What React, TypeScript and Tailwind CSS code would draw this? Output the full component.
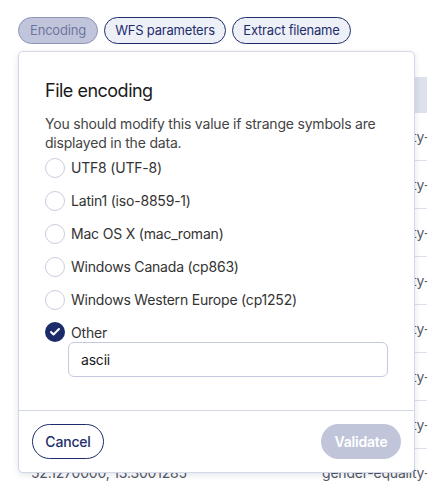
import { Check } from "lucide-react";

const options = [
  "UTF8 (UTF-8)",
  "Latin1 (iso-8859-1)",
  "Mac OS X (mac_roman)",
  "Windows Canada (cp863)",
  "Windows Western Europe (cp1252)",
];

const rows = Array.from({ length: 8 }, () => ({
  coords: "52.1270000, 13.3001285",
  tag: "gender-equality-ranking",
}));

function Radio({ checked = false }: { checked?: boolean }) {
  if (checked) {
    return (
      <span className="flex h-5 w-5 shrink-0 items-center justify-center rounded-full bg-[#1b2a68]">
        <Check size={12} strokeWidth={4} className="text-white" />
      </span>
    );
  }
  return <span className="h-5 w-5 shrink-0 rounded-full border border-[#c9cde0] bg-white" />;
}

export default function App() {
  return (
    <div className="relative h-[484px] w-[427px] overflow-hidden bg-white font-['Inter',sans-serif] tracking-[-0.2px]">
      <div className="flex gap-[6px] px-[18px] pt-[17px]">
        <button className="h-[27px] w-[80px] rounded-full border border-[#8d94b9] bg-[#c1c5db] text-[13px] text-[#6e76a0]">
          Encoding
        </button>
        <button className="h-[27px] w-[122px] rounded-full border border-[#1d2d6b] bg-[#eef0f7] text-[13px] text-[#1d2d6b]">
          WFS parameters
        </button>
        <button className="h-[27px] w-[119px] rounded-full border border-[#1d2d6b] bg-[#eef0f7] text-[13px] text-[#1d2d6b]">
          Extract filename
        </button>
      </div>

      {/* table beneath the popover */}
      <div className="ml-[18px] mt-[33px] text-[14px] text-[#555a66]">
        <div className="h-[36px] bg-[#dde1ec]" />
        {rows.map((r, i) => (
          <div key={i} className="flex h-[48px] items-center border-b border-[#dde1ec]">
            <span className="w-[304px] shrink-0 whitespace-nowrap pl-[13px]">{r.coords}</span>
            <span className="shrink-0 whitespace-nowrap">{r.tag}</span>
          </div>
        ))}
      </div>

      {/* popover */}
      <div className="absolute left-[18px] top-[51px] flex h-[422px] w-[397px] flex-col rounded-[5px] border border-[#d3d7e6] bg-white shadow-[0_2px_6px_rgba(20,30,70,0.12)]">
        <div className="flex-1 pl-[26px] pr-[20px] pt-[27px]">
          <h2 className="text-[18px] leading-[24px] font-normal tracking-[-0.5px] text-[#1a1a1a]">File encoding</h2>
          <p className="mt-[11px] text-[14px] leading-[19px] text-[#444]">
            You should modify this value if strange symbols are displayed in the data.
          </p>
          <div className="-mt-px">
            {options.map((o) => (
              <div key={o} className="flex h-[33px] items-center gap-[6px] text-[14px] text-[#333]">
                <Radio />
                <span>{o}</span>
              </div>
            ))}
            <div className="mt-[6px] flex h-[20px] items-center gap-[6px] text-[14px] text-[#333]">
              <Radio checked />
              <span>Other</span>
            </div>
          </div>
          <input
            readOnly
            value="ascii"
            className="ml-[23px] h-[35px] w-[320px] rounded-[6px] border border-[#c5c9dd] px-[12px] text-[14px] text-[#1a1a1a] outline-none"
          />
        </div>
        <div className="flex items-center justify-between border-t border-[#d3d7e6] px-[13px] pb-[13px] pt-[13px]">
          <button className="h-[35px] w-[72px] rounded-full border border-[#1d2d6b] bg-white text-[14px] font-medium text-[#1d2d6b]">
            Cancel
          </button>
          <button className="h-[35px] w-[80px] rounded-full bg-[#c1c5da] text-[14px] font-semibold text-white">
            Validate
          </button>
        </div>
      </div>
    </div>
  );
}
